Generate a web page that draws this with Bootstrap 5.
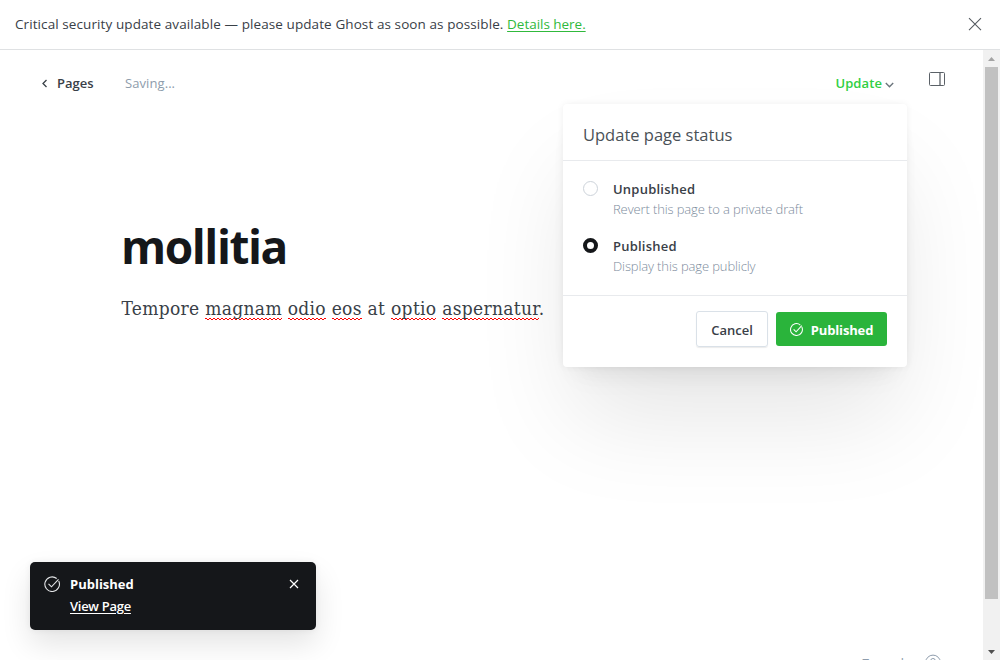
<!DOCTYPE html>
<html lang="en">
<head>
<meta charset="utf-8">
<meta name="viewport" content="width=device-width, initial-scale=1">
<title>Ghost editor</title>
<link href="https://cdn.jsdelivr.net/npm/bootstrap@5.3.0/dist/css/bootstrap.min.css" rel="stylesheet">
<style>
:root { --ink:#15171a; --body:#394047; --mid:#8e9cac; --green:#30cf43; }
body { font-family:"Open Sans","Noto Sans",sans-serif; font-size:13px; line-height:20px; color:var(--body); height:660px; }
svg { display:block; fill:none; flex:none; }
.notice { height:50px; border-bottom:1px solid #dfe1e3; padding:0 18px 2px 15px; font-size:13.5px; letter-spacing:.09px; }
.notice a { color:#30b93c; text-underline-offset:2px; letter-spacing:-.03px; }
.t { white-space:nowrap; }
.topbar { height:66px; padding:0 38px 0 41px; }
.back { margin:0 9px 0 0; }
.saving { color:var(--mid); margin-left:31.5px; letter-spacing:.07px; }
.update { color:var(--green); letter-spacing:.1px; }
.chev { margin:4px 35px 0 3px; }
.panel-icon { margin-bottom:8px; }
.post { padding:104px 0 0 121.5px; }
.post h1 { font-weight:700; font-size:46px; line-height:52px; color:var(--ink); margin:0 0 20px -.5px; letter-spacing:-1.45px; }
.post p { font-family:"DejaVu Serif Condensed","DejaVu Serif",serif; font-size:19px; line-height:32px; margin:0; letter-spacing:.32px; }
.post u { text-decoration:none; padding-bottom:1px;
  background:linear-gradient(90deg,#f00 50%,transparent 50%) 0 calc(100% - 1px)/4px 1px repeat-x,linear-gradient(90deg,transparent 50%,#f00 50%) 0 100%/4px 1px repeat-x; }
.scroller { width:17px; background:#f1f1f1; padding:0 2px; }
.thumb { height:532px; background:#c1c1c1; }
.status { top:104px; left:563px; width:344px; height:263px; border-radius:4px; background:#fff; box-shadow:0 0 7px rgba(0,0,0,.06),0 12px 25px -12px rgba(0,0,0,.06),0 20px 30px -12px rgba(0,0,0,.04),0 60px 100px -10px rgba(0,0,0,.1); }
.status header { height:57px; padding:20px 20px 0; border-bottom:1px solid #e8eaed; font-size:16.5px; line-height:22px; color:#4a5157; }
.choices { height:135px; padding:18px 20px 0; border-bottom:1px solid #e8eaed; }
.choice { height:57px; gap:15px; }
.choice .fw-semibold { letter-spacing:.22px; }
.dot { width:15px; height:15px; border:1px solid #cdd3da; border-radius:50%; margin-top:2px; flex:none; }
.dot.on { border:4px solid var(--ink); }
.hint { color:#7c8b9c; font-weight:300; letter-spacing:-.12px; }
.status footer { padding:15px 20px; gap:8px; }
.status .btn { font:inherit; font-weight:600; line-height:20px; padding:0; border-radius:3px; }
.status .cancel { width:72px; height:36px; border:1px solid #dae1e8; color:var(--body); box-shadow:0 1px 1px rgba(0,0,0,.08); padding-top:1px; }
.status .publish { width:111px; height:34px; margin-top:1px; background:#2ab43b; color:#fff; border:0; font-weight:700; letter-spacing:-.15px; padding-top:1px; }
.notify { left:30px; top:562px; width:286px; height:68px; border-radius:5px; background:var(--ink); color:#fff; padding:12px 17px 0 14px; box-shadow:0 0 7px rgba(0,0,0,.06),0 14px 30px rgba(0,0,0,.11); }
.notify .tick { margin:2px 10px 0 0; }
.notify .shut { margin-top:5px; }
.notify a { color:#fff; font-weight:600; text-underline-offset:2px; line-height:24px; letter-spacing:-.28px; }
.counter { left:862px; top:652px; width:81px; color:var(--mid); }
.words { margin-top:1px; }
</style>
</head>
<body class="overflow-hidden position-relative d-flex flex-column bg-white">
<div class="notice d-flex align-items-center justify-content-between flex-shrink-0">
  <div class="t">Critical security update available — please update Ghost as soon as possible. <a href="#">Details here.</a></div>
  <svg width="14" height="14" viewBox="0 0 14 14" stroke="#555b61" stroke-width="1.1"><path d="M1 1.200l12 12M13 1.200l-12 12"/></svg>
</div>
<div class="d-flex flex-grow-1">
  <main class="flex-grow-1">
    <nav class="topbar d-flex align-items-center">
      <svg class="back" width="7" height="9" viewBox="0 0 7 9" stroke="#394047" stroke-width="1.3"><path d="M5.500 1L2 4.500 5.500 8"/></svg>
      <span class="t fw-semibold">Pages</span>
      <span class="t saving">Saving...</span>
      <span class="t update fw-semibold ms-auto">Update</span>
      <svg class="chev" width="9" height="6" viewBox="0 0 9 6" stroke="#6b747c" stroke-width="1.400"><path d="M.8 1l3.700 3.700L8.200 1"/></svg>
      <svg class="panel-icon" width="16" height="14" viewBox="0 0 16 14" stroke="#5b6167"><rect x=".5" y=".5" width="15" height="13" rx="1"/><path d="M11 .5v13" stroke-width="1.300"/></svg>
    </nav>
    <article class="post">
      <h1 class="t">mollitia</h1>
      <p class="t">Tempore <u>magnam</u> <u>odio</u> <u>eos</u> at <u>optio</u> <u>aspernatur</u>.</p>
    </article>
  </main>
  <div class="scroller d-flex flex-column">
    <svg width="13" height="17"><path d="M3 11l3.500-4 3.500 4z" fill="#a3a3a3"/></svg>
    <div class="thumb"></div>
    <svg width="13" height="17" class="mt-auto"><path d="M3 7h7l-3.500 4z" fill="#505050"/></svg>
  </div>
</div>
<section class="status position-absolute">
  <header class="t">Update page status</header>
  <div class="choices">
    <div class="choice d-flex"><i class="dot"></i><div class="t"><div class="fw-semibold">Unpublished</div><div class="hint">Revert this page to a private draft</div></div></div>
    <div class="choice d-flex"><i class="dot on"></i><div class="t"><div class="fw-semibold">Published</div><div class="hint">Display this page publicly</div></div></div>
  </div>
  <footer class="d-flex justify-content-end">
    <button class="btn cancel">Cancel</button>
    <button class="btn publish d-flex align-items-center justify-content-center gap-2"><svg width="13" height="13" viewBox="0 0 16 16" stroke="#fff" stroke-width="1.300"><path d="M14.600 5A7.300 7.300 0 1 1 12.700 2.500M4.500 7.800l3 3 7-7.500"/></svg>Published</button>
  </footer>
</section>
<aside class="notify position-absolute d-flex align-items-start">
  <svg class="tick" width="16" height="16" viewBox="0 0 16 16" stroke="#e4e6e8" stroke-width="1.100"><path d="M14.700 5A7.300 7.300 0 1 1 12.700 2.500M4.500 7.800l3 3 7-7.500"/></svg>
  <div class="t"><div class="fw-bold">Published</div><a href="#">View Page</a></div>
  <svg class="shut ms-auto" width="10" height="10" viewBox="0 0 10 10" stroke="#fff" stroke-width="1.200"><path d="M1 1l8 8M9 1L1 9"/></svg>
</aside>
<div class="counter position-absolute d-flex align-items-start t">
  <span class="words">7 words</span>
  <svg class="ms-auto" width="20" height="19" viewBox="-2 -2 20 19" stroke="#8e9cac"><circle cx="8" cy="8.500" r="7.400"/><path d="M5.700 6.700a2.300 2.300 0 1 1 2.800 2.300q-.5.200-.5 1.200M8 11.500v1"/></svg>
</div>
<script src="https://cdn.jsdelivr.net/npm/bootstrap@5.3.0/dist/js/bootstrap.bundle.min.js"></script>
</body>
</html>
